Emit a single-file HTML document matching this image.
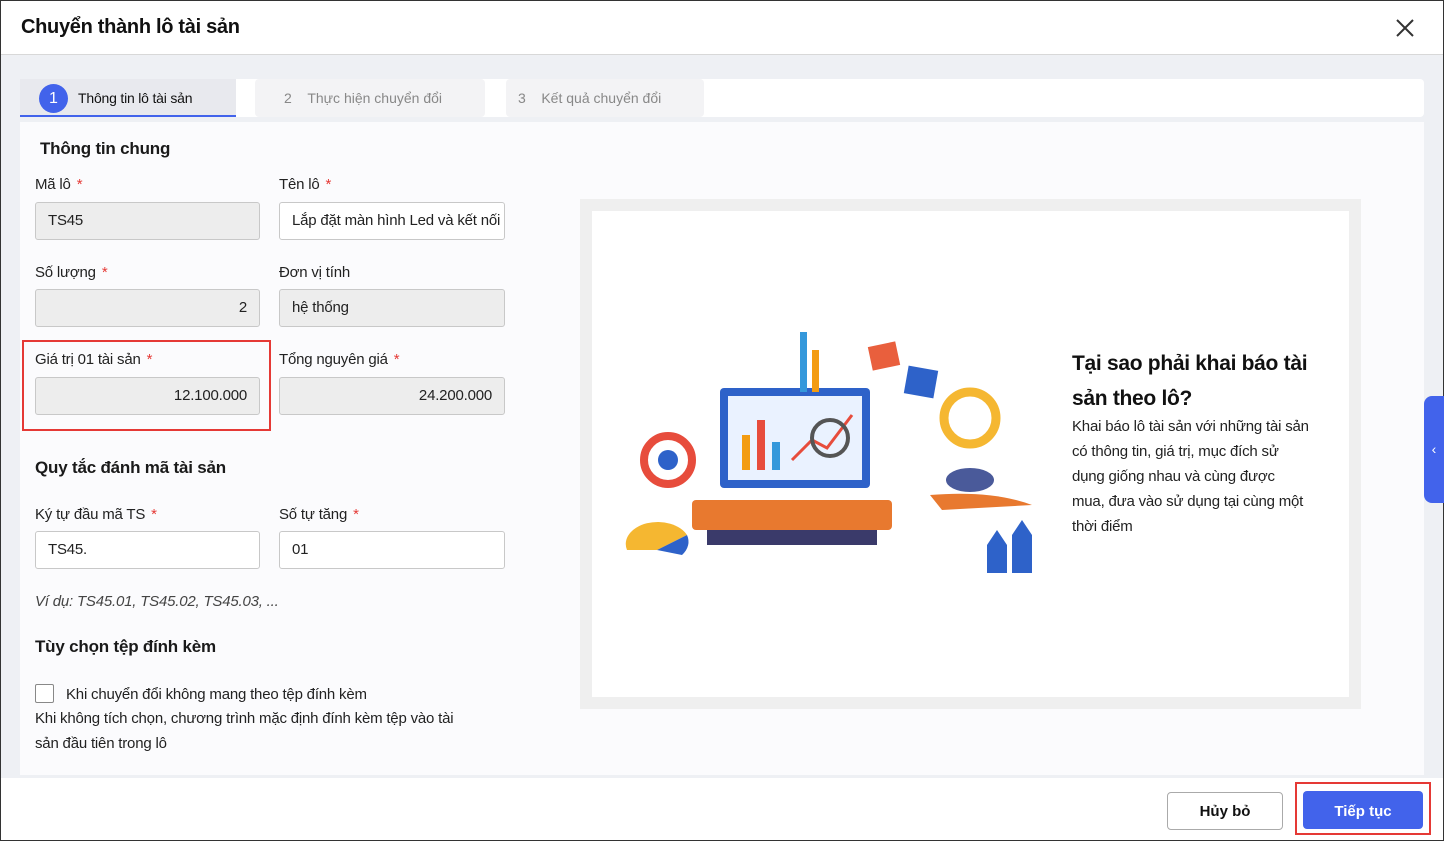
<!DOCTYPE html>
<html><head><meta charset="utf-8"><style>
*{box-sizing:border-box;margin:0;padding:0}
body{width:1444px;height:841px;overflow:hidden;font-family:"Liberation Sans",sans-serif;background:#fff;position:relative;color:#111;font-size:15px}
.a{position:absolute}
.inp{position:absolute;height:38px;border:1px solid #c8c8c8;border-radius:3px;background:#fff;padding:0 12px;line-height:36px;font-size:15px;color:#222;overflow:hidden;white-space:nowrap;letter-spacing:-0.2px}
.dis{background:#ededed}
.lbl{position:absolute;font-size:15px;color:#222;letter-spacing:-0.2px}
.req{color:#e53935;margin-left:6px}
.h{position:absolute;font-size:17px;font-weight:bold;color:#1a1a1a;letter-spacing:-0.2px}
</style></head><body>
<div class="a" style="left:0;top:0;width:1444px;height:841px;border:1px solid #333"></div>
<div class="a" style="left:21px;top:16px;font-size:20px;font-weight:bold;color:#111;letter-spacing:-0.3px">Chuyển thành lô tài sản</div>
<svg class="a" style="left:1395px;top:18px" width="20" height="20"><path d="M2 2L18 18M18 2L2 18" stroke="#333" stroke-width="2"/></svg>
<div class="a" style="left:1px;top:54px;width:1442px;height:724px;background:#eef0f4;border-top:1px solid #d8d8d8"></div>
<div class="a" style="left:20px;top:79px;width:1404px;height:38px;background:#fff;border-radius:4px"></div>
<div class="a" style="left:20px;top:79px;width:216px;height:38px;background:#e8e9ee;border-bottom:2px solid #4263eb"></div>
<div class="a" style="left:39px;top:84px;width:29px;height:29px;border-radius:50%;background:#4263eb;color:#fff;text-align:center;line-height:29px;font-size:16px">1</div>
<div class="a" style="left:78px;top:90px;font-size:14px;color:#111;letter-spacing:-0.2px">Thông tin lô tài sản</div>
<div class="a" style="left:255px;top:79px;width:230px;height:38px;background:#f3f3f5;border-radius:4px"></div>
<div class="a" style="left:284px;top:90px;font-size:14px;color:#888">2&nbsp;&nbsp;&nbsp;&nbsp;Thực hiện chuyển đổi</div>
<div class="a" style="left:506px;top:79px;width:198px;height:38px;background:#f3f3f5;border-radius:4px"></div>
<div class="a" style="left:518px;top:90px;font-size:14px;color:#888">3&nbsp;&nbsp;&nbsp;&nbsp;Kết quả chuyển đổi</div>
<div class="a" style="left:20px;top:122px;width:1404px;height:653px;background:#fbfbfd"></div>
<div class="h" style="left:40px;top:139px">Thông tin chung</div>
<div class="lbl" style="left:35px;top:176px">Mã lô<span class="req">*</span></div>
<div class="lbl" style="left:279px;top:176px">Tên lô<span class="req">*</span></div>
<div class="inp dis" style="left:35px;top:202px;width:225px">TS45</div>
<div class="inp" style="left:279px;top:202px;width:226px">Lắp đặt màn hình Led và kết nối</div>
<div class="lbl" style="left:35px;top:264px">Số lượng<span class="req">*</span></div>
<div class="lbl" style="left:279px;top:264px">Đơn vị tính</div>
<div class="inp dis" style="left:35px;top:289px;width:225px;text-align:right">2</div>
<div class="inp dis" style="left:279px;top:289px;width:226px">hệ thống</div>
<div class="a" style="left:22px;top:340px;width:249px;height:91px;border:2px solid #e53935"></div>
<div class="lbl" style="left:35px;top:351px">Giá trị 01 tài sản<span class="req">*</span></div>
<div class="lbl" style="left:279px;top:351px">Tổng nguyên giá<span class="req">*</span></div>
<div class="inp dis" style="left:35px;top:377px;width:225px;text-align:right">12.100.000</div>
<div class="inp dis" style="left:279px;top:377px;width:226px;text-align:right">24.200.000</div>
<div class="h" style="left:35px;top:458px">Quy tắc đánh mã tài sản</div>
<div class="lbl" style="left:35px;top:506px">Ký tự đầu mã TS<span class="req">*</span></div>
<div class="lbl" style="left:279px;top:506px">Số tự tăng<span class="req">*</span></div>
<div class="inp" style="left:35px;top:531px;width:225px">TS45.</div>
<div class="inp" style="left:279px;top:531px;width:226px">01</div>
<div class="lbl" style="left:35px;top:593px;font-style:italic;color:#444">Ví dụ: TS45.01, TS45.02, TS45.03, ...</div>
<div class="h" style="left:35px;top:637px">Tùy chọn tệp đính kèm</div>
<div class="a" style="left:35px;top:684px;width:19px;height:19px;border:1px solid #888;border-radius:2px;background:#fff"></div>
<div class="lbl" style="left:66px;top:686px">Khi chuyển đổi không mang theo tệp đính kèm</div>
<div class="lbl" style="left:35px;top:706px;line-height:25px;width:438px">Khi không tích chọn, chương trình mặc định đính kèm tệp vào tài sản đầu tiên trong lô</div>
<div class="a" style="left:580px;top:199px;width:781px;height:510px;background:#efefef"></div>
<div class="a" style="left:592px;top:211px;width:757px;height:486px;background:#fff"></div>
<svg class="a" style="left:612px;top:320px" width="440" height="270">
<rect x="108" y="68" width="150" height="100" rx="4" fill="#2e62c9"/>
<rect x="116" y="76" width="134" height="84" fill="#eaf2ff"/>
<rect x="130" y="115" width="8" height="35" fill="#f39c12"/><rect x="145" y="100" width="8" height="50" fill="#e74c3c"/><rect x="160" y="122" width="8" height="28" fill="#3498db"/>
<path d="M180 140L200 120L215 128L240 95" stroke="#e74c3c" stroke-width="3" fill="none"/>
<circle cx="218" cy="118" r="18" fill="none" stroke="#555" stroke-width="4"/>
<rect x="80" y="180" width="200" height="30" rx="4" fill="#e8792f"/>
<rect x="95" y="210" width="170" height="15" fill="#3a3a6a"/>
<rect x="188" y="12" width="7" height="60" fill="#3498db"/><rect x="200" y="30" width="7" height="42" fill="#f39c12"/>
<rect x="258" y="24" width="28" height="24" fill="#e95f3d" transform="rotate(-12 272 36)"/>
<rect x="294" y="48" width="30" height="28" fill="#2e62c9" transform="rotate(10 309 62)"/>
<circle cx="358" cy="98" r="26" fill="none" stroke="#f5b731" stroke-width="9"/>
<ellipse cx="358" cy="160" rx="24" ry="12" fill="#4a5a9a"/>
<path d="M318 175Q380 170 420 185L330 190Z" fill="#e8792f"/>
<circle cx="56" cy="140" r="24" fill="none" stroke="#e74c3c" stroke-width="8"/><circle cx="56" cy="140" r="10" fill="#2e62c9"/>
<path d="M15 230A32 22 0 0 1 75 215L45 230Z" fill="#f5b731"/><path d="M45 230L75 215A32 22 0 0 1 70 235Z" fill="#2e62c9"/>
<path d="M375 253V225L385 210L395 225V253Z M400 253V215L410 200L420 215V253Z" fill="#2e62c9"/>
</svg>
<div class="a" style="left:1072px;top:346px;width:260px;font-size:21px;font-weight:bold;line-height:35px;color:#111;letter-spacing:-0.3px">Tại sao phải khai báo tài sản theo lô?</div>
<div class="a" style="left:1072px;top:414px;width:238px;font-size:15px;line-height:25px;color:#222;letter-spacing:-0.2px">Khai báo lô tài sản với những tài sản có thông tin, giá trị, mục đích sử dụng giống nhau và cùng được mua, đưa vào sử dụng tại cùng một thời điểm</div>
<div class="a" style="left:1424px;top:396px;width:20px;height:107px;background:#4263eb;border-radius:8px 0 0 8px;color:#fff;font-size:14px;line-height:107px;text-align:center">‹</div>
<div class="a" style="left:1167px;top:792px;width:116px;height:38px;border:1px solid #aaa;border-radius:4px;background:#fff;text-align:center;line-height:38px;font-weight:bold;font-size:15px">Hủy bỏ</div>
<div class="a" style="left:1295px;top:782px;width:136px;height:53px;border:2px solid #e53935"></div>
<div class="a" style="left:1303px;top:791px;width:120px;height:38px;background:#4263eb;border-radius:4px;color:#fff;text-align:center;line-height:42px;font-weight:bold;font-size:15px">Tiếp tục</div>
</body></html>
